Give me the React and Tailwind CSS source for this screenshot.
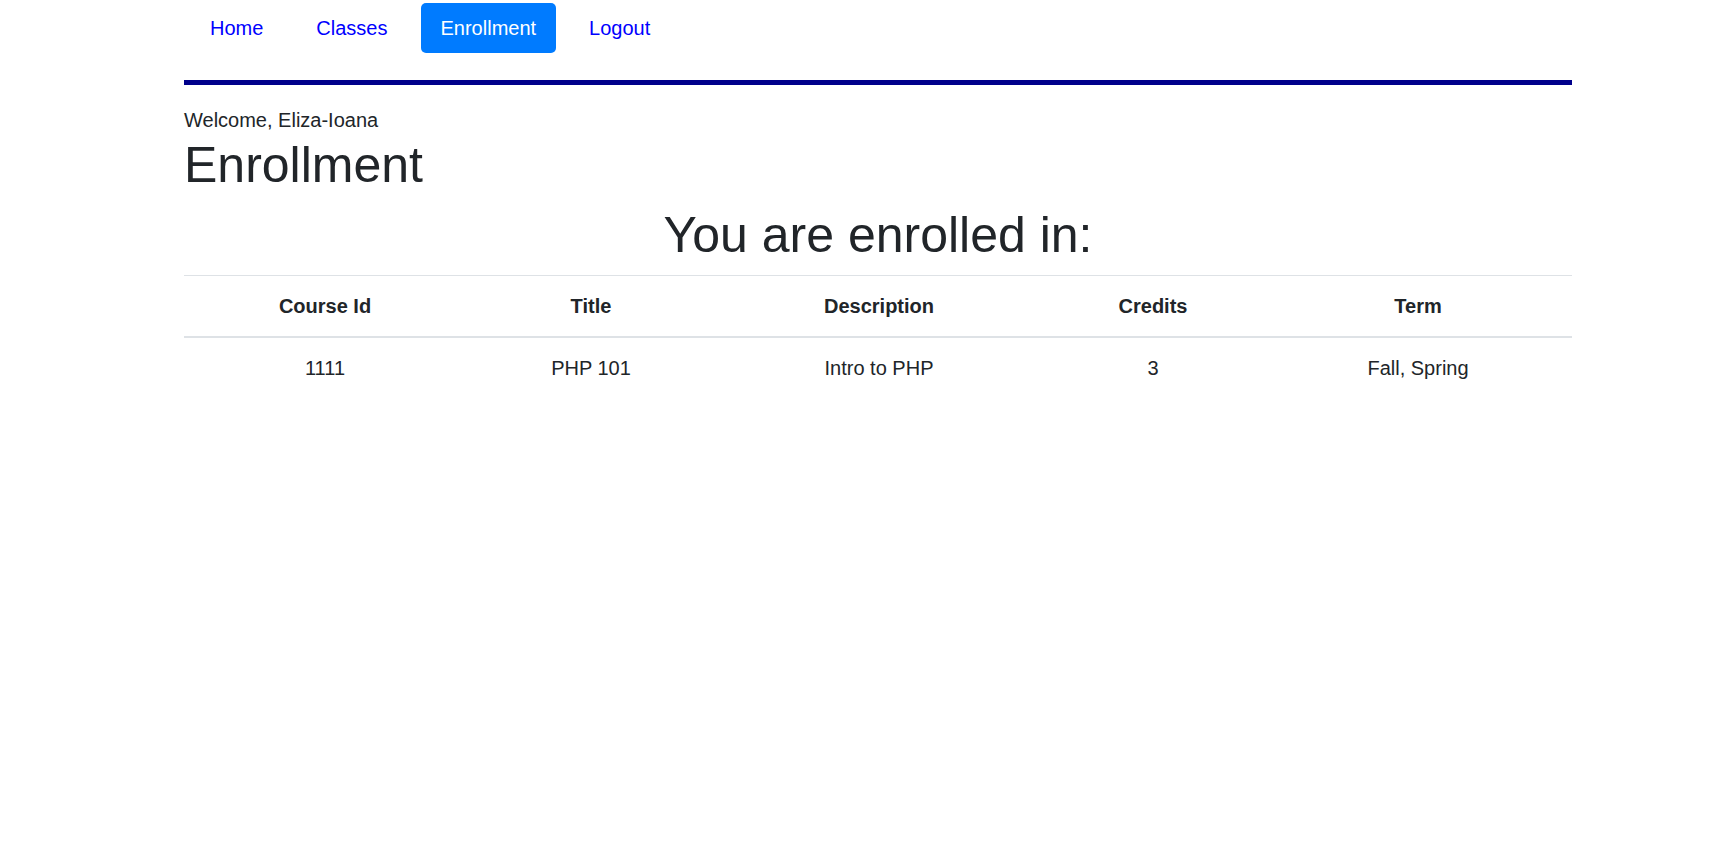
import React from 'react';

const courses = [
  { id: '1111', title: 'PHP 101', description: 'Intro to PHP', credits: '3', term: 'Fall, Spring' },
];

function App() {
  return (
    <div className="min-h-screen bg-white font-['Liberation_Sans',Arial,sans-serif] text-[20px] leading-[30px] text-[#212529]">
      <div className="ml-[184px] w-[1388px]">
        {/* Nav */}
        <nav className="pt-[3px] pl-[6px]">
          <ul className="flex gap-[13px]">
            <li><a className="block px-[20px] py-[10px] rounded-[5px] text-[#0000ff]">Home</a></li>
            <li><a className="block px-[20px] py-[10px] rounded-[5px] text-[#0000ff]">Classes</a></li>
            <li><a className="block px-[20px] py-[10px] rounded-[5px] bg-[#007bff] text-white">Enrollment</a></li>
            <li><a className="block px-[20px] py-[10px] rounded-[5px] text-[#0000ff]">Logout</a></li>
          </ul>
        </nav>
        <div className="mt-[27px] h-[5px] bg-[#00008b]" />

        <div className="mt-[20px]">Welcome, Eliza-Ioana</div>
        <h1 className="text-[50px] leading-[60px] mb-[10px]">Enrollment</h1>

        <h1 className="text-[50px] leading-[60px] mb-[10px] text-center">You are enrolled in:</h1>

        <table className="w-full border-collapse text-center">
          <colgroup>
            <col className="w-[282px]" />
            <col className="w-[250px]" />
            <col className="w-[326px]" />
            <col className="w-[222px]" />
            <col className="w-[308px]" />
          </colgroup>
          <thead>
            <tr>
              <th className="p-[15px] border-t border-t-[#dee2e6] border-b-2 border-b-[#dee2e6] font-bold">Course Id</th>
              <th className="p-[15px] border-t border-t-[#dee2e6] border-b-2 border-b-[#dee2e6] font-bold">Title</th>
              <th className="p-[15px] border-t border-t-[#dee2e6] border-b-2 border-b-[#dee2e6] font-bold">Description</th>
              <th className="p-[15px] border-t border-t-[#dee2e6] border-b-2 border-b-[#dee2e6] font-bold">Credits</th>
              <th className="p-[15px] border-t border-t-[#dee2e6] border-b-2 border-b-[#dee2e6] font-bold">Term</th>
            </tr>
          </thead>
          <tbody>
            {courses.map((c) => (
              <tr key={c.id}>
                <td className="p-[15px]">{c.id}</td>
                <td className="p-[15px]">{c.title}</td>
                <td className="p-[15px]">{c.description}</td>
                <td className="p-[15px]">{c.credits}</td>
                <td className="p-[15px]">{c.term}</td>
              </tr>
            ))}
          </tbody>
        </table>
      </div>
    </div>
  );
}

export default App;
